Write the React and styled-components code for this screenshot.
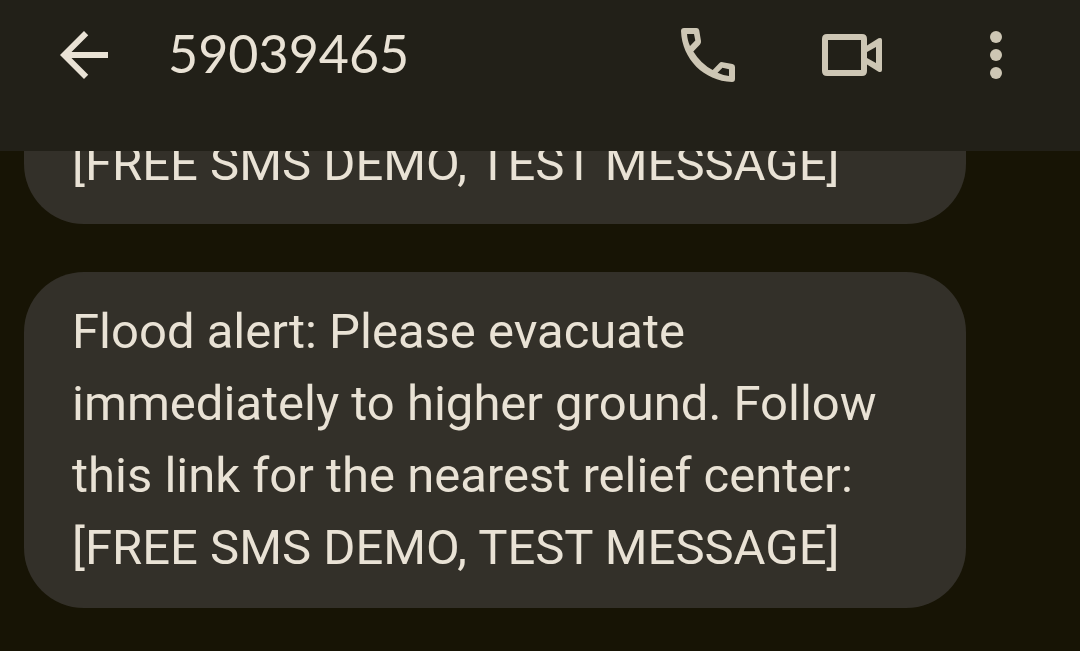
import React from "react";
import styled, { createGlobalStyle } from "styled-components";

const GlobalStyle = createGlobalStyle`
  *, *::before, *::after { box-sizing: border-box; }
  body { margin: 0; background: #171405; }
`;

const Screen = styled.div`
  display: flex;
  flex-direction: column;
  height: 100vh;
  overflow: hidden;
  background: #171405;
  color: #e9e2d5;
  font-family: Roboto, "Liberation Sans", sans-serif;
`;

const Header = styled.header`
  display: flex;
  flex-shrink: 0;
  align-items: center;
  gap: 48px;
  padding: 19px 48px 60px;
  background: #222018;
`;

const Title = styled.h1`
  flex: 1;
  margin: 0;
  padding-bottom: 4px;
  font-family: Lato, sans-serif;
  font-size: 52px;
  font-weight: 400;
  line-height: 68px;
`;

const Actions = styled.div`
  display: flex;
  gap: 72px;
`;

const IconButton = styled.button`
  display: block;
  width: 72px;
  height: 72px;
  padding: 0;
  border: 0;
  background: none;
  color: ${({ $muted }) => ($muted ? "#cdc6b4" : "#e9e2d5")};
  cursor: pointer;
`;

const Glyph = styled.svg`
  display: block;
  width: 100%;
  height: 100%;
  fill: currentColor;
`;

const Thread = styled.main`
  display: flex;
  flex: 1;
  flex-direction: column;
  justify-content: flex-end;
  gap: 48px;
  min-height: 0;
  padding: 0 114px 43px 24px;
  overflow: hidden;
`;

const Bubble = styled.p`
  flex-shrink: 0;
  margin: 0;
  padding: 24px 48px;
  border-radius: ${({ $continued }) => ($continued ? "0 0 60px 60px" : "60px")};
  background: #333029;
  font-size: 49px;
  line-height: 72px;
`;

const BackIcon = () => (
  <Glyph viewBox="0 0 24 24" aria-hidden="true">
    <path d="M20 11H7.83l5.59-5.59L12 4l-8 8 8 8 1.41-1.41L7.83 13H20z" />
  </Glyph>
);

const CallIcon = () => (
  <Glyph viewBox="0 0 72 72" aria-hidden="true">
    <path
      fillRule="evenodd"
      d="M12 9H24.500Q26.700 9 27.200 11.200L29 22Q29.300 24 28 25.400L21.300 32.500Q29 45 40.700 51L47 44.500Q48.500 42.800 50.700 43.200L60.500 45Q63 45.500 63 48V60Q63 63 60 63C32 62 10 40 9 12Q9 9 12 9ZM15 15C15.300 19 16.200 23 18 27L23.300 21.500L22 15ZM45.500 53.800L50.500 48.800L57 50.300V57Q51 56.500 45.500 53.800Z"
    />
  </Glyph>
);

const VideoIcon = () => (
  <Glyph viewBox="0 0 72 72" aria-hidden="true">
    <path
      fillRule="evenodd"
      d="M11 15H46Q51 15 51 20V26.500L62.500 19.300Q66 18 66 21V51Q66 54 62.500 52.700L51 45.500V52Q51 57 46 57H11Q6 57 6 52V20Q6 15 11 15ZM12 21V51H45V21ZM51 33V39L60 44V28Z"
    />
  </Glyph>
);

const MoreIcon = () => (
  <Glyph viewBox="0 0 72 72" aria-hidden="true">
    <circle cx="36" cy="18" r="6" />
    <circle cx="36" cy="36" r="6" />
    <circle cx="36" cy="54" r="6" />
  </Glyph>
);

export default function App() {
  return (
    <Screen>
      <GlobalStyle />
      <Header>
        <IconButton type="button" aria-label="Back">
          <BackIcon />
        </IconButton>
        <Title>59039465</Title>
        <Actions>
          <IconButton type="button" aria-label="Call" $muted>
            <CallIcon />
          </IconButton>
          <IconButton type="button" aria-label="Video call" $muted>
            <VideoIcon />
          </IconButton>
          <IconButton type="button" aria-label="More options" $muted>
            <MoreIcon />
          </IconButton>
        </Actions>
      </Header>
      <Thread>
        <Bubble $continued>[FREE SMS DEMO, TEST MESSAGE]</Bubble>
        <Bubble>
          Flood alert: Please evacuate immediately to higher ground. Follow this
          link for the nearest relief center: [FREE SMS DEMO, TEST MESSAGE]
        </Bubble>
      </Thread>
    </Screen>
  );
}
